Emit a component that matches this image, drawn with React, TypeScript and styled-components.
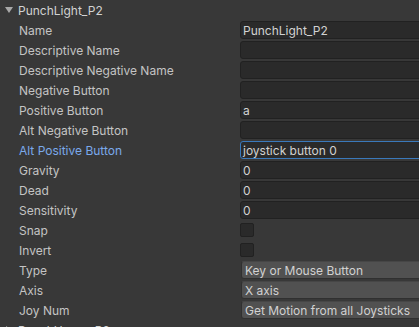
import React from "react";
import styled, { createGlobalStyle } from "styled-components";

const Global = createGlobalStyle`
  html, body { margin: 0; padding: 0; background: #383838; overflow: hidden; }
  body { font-family: Inter, "Noto Sans", sans-serif; font-size: 12px; }
`;

const Panel = styled.div`
  width: 419px;
  height: 327px;
  overflow: hidden;
  background: #383838;
  display: flex;
  flex-direction: column;
`;

const Header = styled.div`
  height: 20px;
  display: flex;
  align-items: center;
  gap: 5px;
  padding-left: 5px;
  color: #d2d2d2;
  font-size: 12px;
  flex-shrink: 0;
`;

const Arrow = styled.svg`
  width: 8px;
  height: 8px;
  flex-shrink: 0;
`;

const Row = styled.div`
  height: 20px;
  display: grid;
  grid-template-columns: 240px 1fr;
  align-items: center;
  flex-shrink: 0;
`;

const Label = styled.div<{ $active?: boolean }>`
  padding-left: 19px;
  color: ${(p) => (p.$active ? "#7aa9eb" : "#c4c4c4")};
  white-space: nowrap;
`;

const Field = styled.div<{ $focused?: boolean }>`
  height: 18px;
  box-sizing: border-box;
  margin-right: -10px;
  background: #2a2a2a;
  border: 1px solid ${(p) => (p.$focused ? "#3a79bb" : "#212121")};
  border-radius: 3px;
  color: #d2d2d2;
  padding-left: 2px;
  display: flex;
  align-items: center;
  white-space: nowrap;
`;

const Check = styled.div`
  width: 14px;
  height: 14px;
  box-sizing: border-box;
  background: #2a2a2a;
  border: 1px solid #212121;
  border-radius: 2px;
`;

const Dropdown = styled.div`
  height: 18px;
  box-sizing: border-box;
  margin-left: 1px;
  margin-right: -10px;
  background: #515151;
  border: 1px solid #303030;
  border-top-color: #464646;
  border-radius: 3px;
  color: #d2d2d2;
  padding-left: 3px;
  display: flex;
  align-items: center;
  white-space: nowrap;
`;

type Item =
  | { label: string; kind: "text"; value: string; focused?: boolean; active?: boolean }
  | { label: string; kind: "check" }
  | { label: string; kind: "drop"; value: string };

const items: Item[] = [
  { label: "Name", kind: "text", value: "PunchLight_P2" },
  { label: "Descriptive Name", kind: "text", value: "" },
  { label: "Descriptive Negative Name", kind: "text", value: "" },
  { label: "Negative Button", kind: "text", value: "" },
  { label: "Positive Button", kind: "text", value: "a" },
  { label: "Alt Negative Button", kind: "text", value: "" },
  { label: "Alt Positive Button", kind: "text", value: "joystick button 0", focused: true, active: true },
  { label: "Gravity", kind: "text", value: "0" },
  { label: "Dead", kind: "text", value: "0" },
  { label: "Sensitivity", kind: "text", value: "0" },
  { label: "Snap", kind: "check" },
  { label: "Invert", kind: "check" },
  { label: "Type", kind: "drop", value: "Key or Mouse Button" },
  { label: "Axis", kind: "drop", value: "X axis" },
  { label: "Joy Num", kind: "drop", value: "Get Motion from all Joysticks" },
];

export default function App() {
  return (
    <>
      <Global />
      <Panel>
        <Header>
          <Arrow viewBox="0 0 8 8">
            <path d="M0 1 L8 1 L4 7 Z" fill="#a8a8a8" />
          </Arrow>
          <span>PunchLight_P2</span>
        </Header>
        {items.map((it) => (
          <Row key={it.label}>
            <Label $active={it.kind === "text" && it.active}>{it.label}</Label>
            {it.kind === "text" && <Field $focused={it.focused}>{it.value}</Field>}
            {it.kind === "check" && <Check />}
            {it.kind === "drop" && <Dropdown>{it.value}</Dropdown>}
          </Row>
        ))}
        <Header>
          <Arrow viewBox="0 0 8 8">
            <path d="M1 0 L7 4 L1 8 Z" fill="#a8a8a8" />
          </Arrow>
          <span>PunchHeavy_P2</span>
        </Header>
      </Panel>
    </>
  );
}
